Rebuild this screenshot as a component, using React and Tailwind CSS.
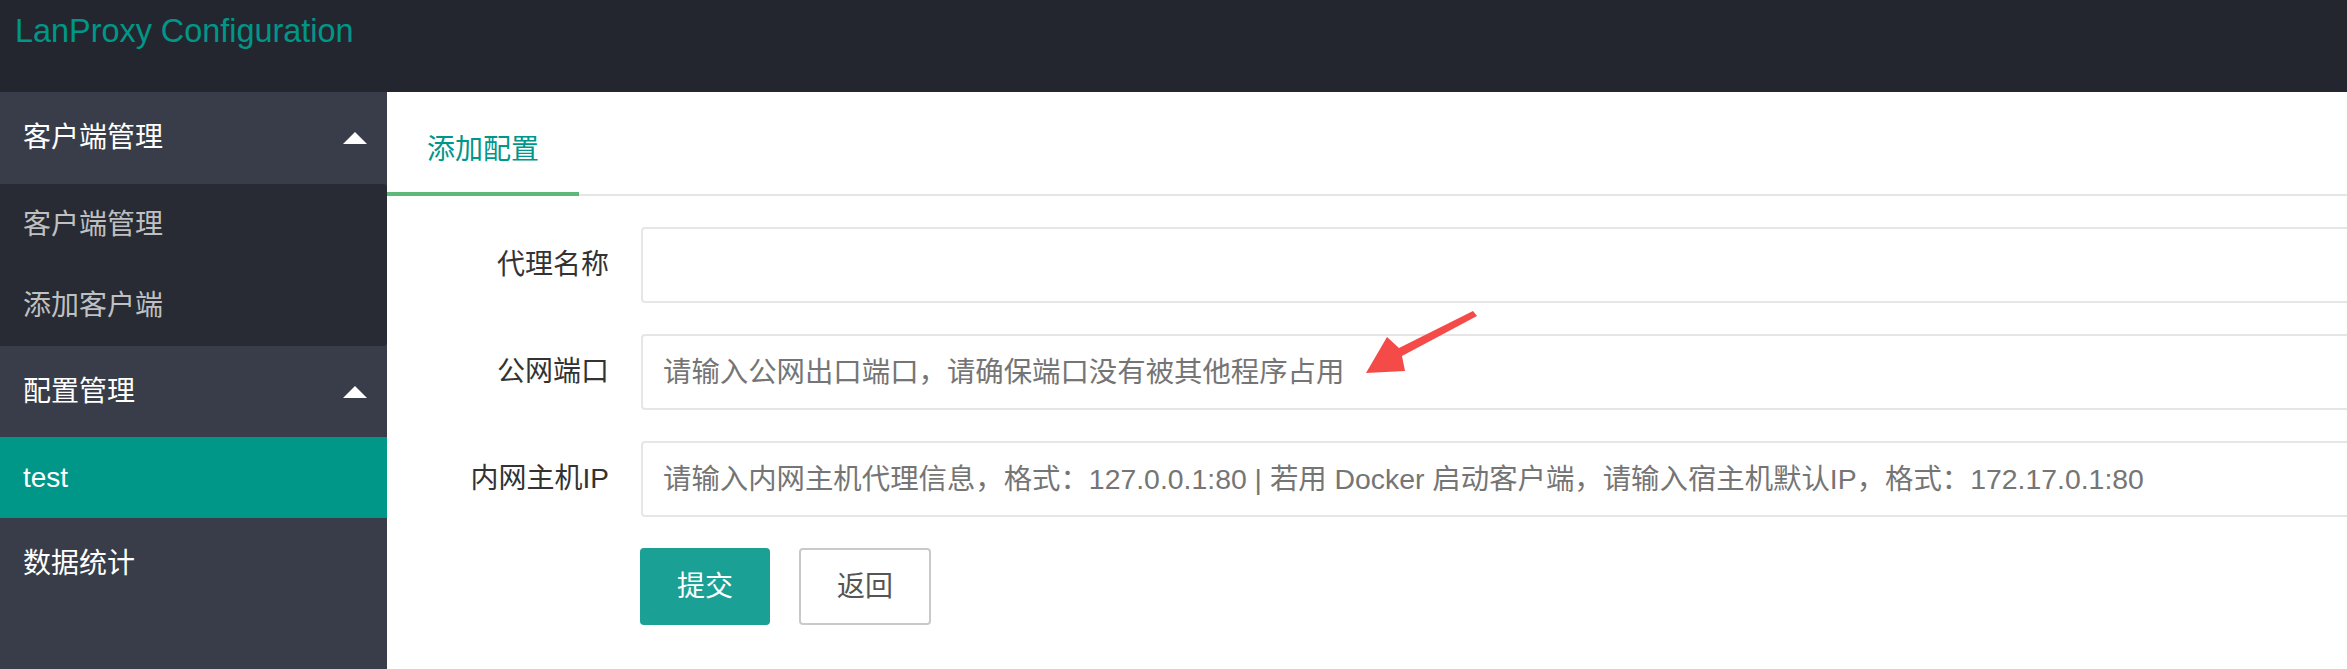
import React from "react";

const FONT = { fontFamily: '"Liberation Sans", "Noto Sans CJK SC", sans-serif' };

function Caret() {
  return <span className="block w-0 h-0 border-l-[12px] border-r-[12px] border-b-[12px] border-l-transparent border-r-transparent border-b-white" />;
}

function FormRow({ label, placeholder }) {
  return (
    <div className="flex items-center">
      <label className="w-[222px] shrink-0 text-right text-[28px] text-[#333] pr-0">{label}</label>
      <div className="ml-[32px] shrink-0">
        <input
          className="w-[1760px] h-[76px] border-2 border-[#e6e6e6] rounded-[4px] bg-white pl-[20px] text-[28.4px] text-[#333] outline-none placeholder:text-[#757575]"
          style={FONT}
          placeholder={placeholder}
        />
      </div>
    </div>
  );
}

export default function App() {
  return (
    <div className="relative w-full h-[669px] overflow-hidden flex flex-col bg-white" style={FONT}>
      <header className="h-[92px] shrink-0 bg-[#23262e] pl-[15px] pt-[15px]">
        <div className="text-[32.4px] leading-none text-[#009688]">LanProxy Configuration</div>
      </header>
      <div className="flex flex-1 min-h-0">
        <aside className="w-[387px] shrink-0 bg-[#393d49] text-[28px]">
          <div className="h-[92px] flex items-center justify-between pl-[23px] pr-[20px] text-white">
            <span>客户端管理</span>
            <Caret />
          </div>
          <div className="bg-[#282b33] rounded-r-[4px]">
            <div className="h-[81px] flex items-center pl-[23px] text-[#bfc0c2]">客户端管理</div>
            <div className="h-[81px] flex items-center pl-[23px] text-[#bfc0c2]">添加客户端</div>
          </div>
          <div className="h-[91px] flex items-center justify-between pl-[23px] pr-[20px] text-white">
            <span>配置管理</span>
            <Caret />
          </div>
          <div className="h-[81px] flex items-center pl-[23px] bg-[#009688] text-white">test</div>
          <div className="h-[91px] flex items-center pl-[23px] text-white">数据统计</div>
        </aside>
        <main className="flex-1 min-w-0 overflow-hidden bg-white">
          <div className="pt-[20px] relative">
            <div className="flex h-[84px] border-b-2 border-[#e6e6e6]">
              <div className="w-[192px] h-[84px] flex items-center justify-center text-[28px] text-[#009688] border-b-4 border-[#5fb878] -mb-[2px] pb-[4px]">
                添加配置
              </div>
            </div>
          </div>
          <div className="pt-[31px] flex flex-col gap-[31px]">
            <FormRow label="代理名称" placeholder="" />
            <FormRow label="公网端口" placeholder="请输入公网出口端口，请确保端口没有被其他程序占用" />
            <FormRow label="内网主机IP" placeholder="请输入内网主机代理信息，格式：127.0.0.1:80 | 若用 Docker 启动客户端，请输入宿主机默认IP，格式：172.17.0.1:80" />
            <div className="flex gap-[29px] pl-[253px]">
              <button className="w-[130px] h-[77px] rounded-[4px] bg-[#1aa094] text-white text-[28px]">提交</button>
              <button className="w-[132px] h-[77px] rounded-[4px] border-2 border-[#c9c9c9] bg-white text-[#555] text-[28px]">返回</button>
            </div>
          </div>
        </main>
      </div>
      <svg className="absolute left-[1360px] top-[305px] w-[120px] h-[75px] pointer-events-none" viewBox="1360 305 120 75">
        <polygon points="1473,311 1399,348 1387,337 1366,373 1405,371 1402,356 1477,316" fill="#f44a48" />
      </svg>
    </div>
  );
}
